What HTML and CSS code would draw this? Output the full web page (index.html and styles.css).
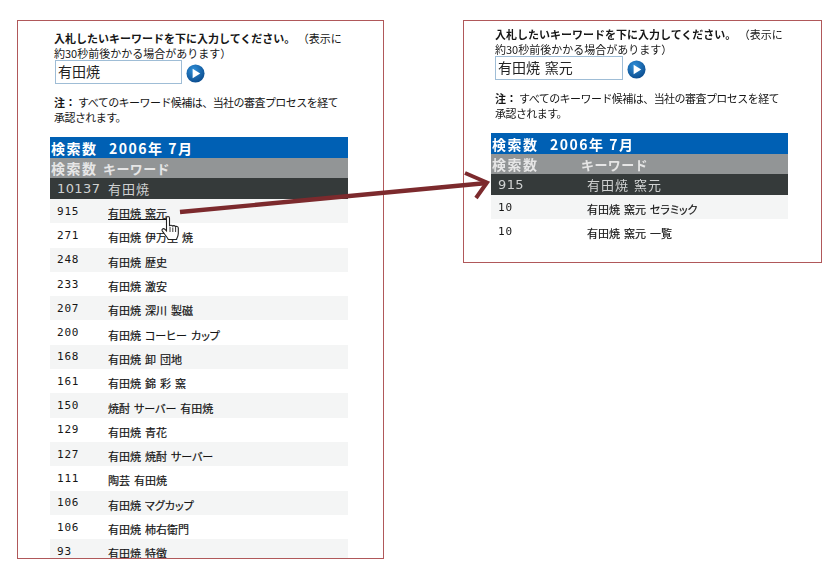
FILE: index.html
```html
<!DOCTYPE html>
<html lang="ja">
<head>
<meta charset="utf-8">
<title>キーワード候補</title>
<link rel="stylesheet" href="styles.css">
</head>
<body>
<main class="stage">
  <section class="panel panel-left">
    <div class="intro"><b>入札したいキーワードを下に入力してください。</b> （表示に<br>約30秒前後かかる場合があります）</div>
    <div class="search">
      <div class="field">有田焼</div>
      <svg class="go" viewBox="0 0 20 20" aria-hidden="true"><defs><radialGradient id="g1" cx="40%" cy="30%" r="75%"><stop offset="0" stop-color="#2f8fd8"/><stop offset="1" stop-color="#0a4a8c"/></radialGradient></defs><circle cx="10" cy="10" r="9.500" fill="url(#g1)"/><path d="M7 5l8 5-8 5z" fill="#fff"/></svg>
    </div>
    <p class="note"><b class="note-label">注：</b>すべてのキーワード候補は、当社の審査プロセスを経て<br>承認されます。</p>
    <div class="table table-left">
      <div class="row head-blue"><span class="c1">検索数</span><span>2006年 7月</span></div>
      <div class="row head-grey"><span class="c1">検索数</span><span>キーワード</span></div>
      <div class="row head-dark"><span class="c1 big-num">10137</span><span>有田焼</span></div>
      <div class="row odd"><span class="c1 num">915</span><a class="kw link">有田焼 窯元</a></div>
      <div class="row"><span class="c1 num">271</span><span class="kw">有田焼 伊万里 焼</span></div>
      <div class="row odd"><span class="c1 num">248</span><span class="kw">有田焼 歴史</span></div>
      <div class="row"><span class="c1 num">233</span><span class="kw">有田焼 激安</span></div>
      <div class="row odd"><span class="c1 num">207</span><span class="kw">有田焼 深川 製磁</span></div>
      <div class="row"><span class="c1 num">200</span><span class="kw">有田焼 コーヒー カップ</span></div>
      <div class="row odd"><span class="c1 num">168</span><span class="kw">有田焼 卸 団地</span></div>
      <div class="row"><span class="c1 num">161</span><span class="kw">有田焼 錦 彩 窯</span></div>
      <div class="row odd"><span class="c1 num">150</span><span class="kw">焼酎 サーバー 有田焼</span></div>
      <div class="row"><span class="c1 num">129</span><span class="kw">有田焼 青花</span></div>
      <div class="row odd"><span class="c1 num">127</span><span class="kw">有田焼 焼酎 サーバー</span></div>
      <div class="row"><span class="c1 num">111</span><span class="kw">陶芸 有田焼</span></div>
      <div class="row odd"><span class="c1 num">106</span><span class="kw">有田焼 マグカップ</span></div>
      <div class="row"><span class="c1 num">106</span><span class="kw">有田焼 柿右衛門</span></div>
      <div class="row odd"><span class="c1 num">93</span><span class="kw">有田焼 特徴</span></div>
    </div>
  </section>
  <section class="panel panel-right">
    <div class="intro"><b>入札したいキーワードを下に入力してください。</b> （表示に<br>約30秒前後かかる場合があります）</div>
    <div class="search">
      <div class="field">有田焼 窯元</div>
      <svg class="go" viewBox="0 0 20 20" aria-hidden="true"><circle cx="10" cy="10" r="9.500" fill="url(#g1)"/><path d="M7 5l8 5-8 5z" fill="#fff"/></svg>
    </div>
    <p class="note"><b class="note-label">注：</b>すべてのキーワード候補は、当社の審査プロセスを経て<br>承認されます。</p>
    <div class="table table-right">
      <div class="row head-blue"><span class="c1">検索数</span><span>2006年 7月</span></div>
      <div class="row head-grey"><span class="c1">検索数</span><span>キーワード</span></div>
      <div class="row head-dark"><span class="c1 big-num">915</span><span class="shift">有田焼 窯元</span></div>
      <div class="row odd"><span class="c1 num">10</span><span class="kw shift">有田焼 窯元 セラミック</span></div>
      <div class="row"><span class="c1 num">10</span><span class="kw shift">有田焼 窯元 一覧</span></div>
    </div>
  </section>
  <svg class="arrow" viewBox="0 0 840 576" aria-hidden="true">
    <path d="M180 212L487 183" stroke="#7c2a2d" stroke-width="4.300" fill="none"/>
    <path d="M465 173L487 182.500L476 198" stroke="#7c2a2d" stroke-width="4" fill="none"/>
  </svg>
  <svg class="hand" viewBox="0 0 20 28" aria-hidden="true">
    <path d="M5.500 3.200c0-2.200 3-2.200 3 0v8c.4-1.400 3-1.400 3 .3.400-1.300 2.800-1.200 3 .5.600-1 2.700-.8 2.800 1v5.500c0 2.500-1 4-2 6h-8c-1-2.500-4.500-6-6-8.500-1-1.800 1-3 2.500-1.800l1.700 1.700z" fill="#fff" stroke="#222" stroke-width="1.100"/>
    <path d="M9 12v5M11.800 12.500v4.500M14.600 13v4" stroke="#222" stroke-width=".9" fill="none"/>
  </svg>
</main>
</body>
</html>
```

FILE: styles.css
```css
html, body {
  margin: 0;
  padding: 0;
  background: #fff;
}
.stage {
  position: relative;
  width: 840px;
  height: 576px;
  overflow: hidden;
  display: flex;
  align-items: flex-start;
  padding: 20px 0 0 17px;
  box-sizing: border-box;
  gap: 79px;
  font-family: "Noto Sans CJK JP", "Liberation Sans", sans-serif;
  color: #161616;
  filter: blur(0.35px);
}
.panel {
  box-sizing: border-box;
  flex: none;
  border: 1px solid #b0585a;
  overflow: hidden;
  background: #fff;
}
.panel-left {
  width: 367px;
  height: 539px;
  padding: 10px 0 0 32px;
}
.panel-right {
  width: 359px;
  height: 243px;
  padding: 6px 0 0 27px;
}
.intro {
  margin-left: 4px;
  font-size: 11px;
  line-height: 15px;
  white-space: nowrap;
}
.search {
  display: flex;
  align-items: center;
  gap: 4px;
  margin: -2px 0 0 5px;
  height: 26px;
}
.panel-right .search { margin-left: 4px; }
.panel-right .field { width: 128px; }
.field {
  box-sizing: border-box;
  width: 127px;
  height: 24px;
  border: 1px solid #9fbdd6;
  padding-left: 2px;
  font-size: 14px;
  line-height: 20px;
  word-spacing: 1.500px;
  color: #222;
}
.go {
  width: 19px;
  height: 19px;
  margin-top: 3px;
}
.note {
  margin: 10px 0 0 4px;
  font-size: 11px;
  line-height: 15px;
  white-space: nowrap;
  letter-spacing: -.55px;
}
.note-label {
  display: inline-block;
  width: 24px;
  letter-spacing: 0;
}
.table {
  width: 298px;
  margin-top: 12px;
}
.table-right { width: 297px; }
.row {
  display: flex;
  align-items: center;
  height: 24.3px;
  font-size: 11px;
}
.odd { background: #f4f5f5; }
.c1 {
  flex: none;
  width: 58px;
  box-sizing: border-box;
  padding-left: 7px;
}
.head-blue {
  height: 21px;
  background: #0060b4;
  color: #fff;
  font-weight: 700;
  font-size: 14px;
  letter-spacing: 1.500px;
}
.head-grey {
  height: 20px;
  background: #929596;
  color: #e6e6e6;
  font-weight: 700;
  font-size: 13px;
  letter-spacing: .4px;
}
.head-dark {
  height: 21px;
  background: #353a3a;
  color: #d0d2d2;
  font-size: 13px;
  letter-spacing: 1px;
  word-spacing: 1px;
}
.head-blue .c1, .head-grey .c1 {
  padding-left: 1px;
  letter-spacing: 1.500px;
  font-size: 14px;
}
.head-blue .c1 { width: 59px; }
.table-left .head-grey .c1 { width: 53px; }
.big-num {
  font-family: "DejaVu Sans", sans-serif;
  font-weight: 400;
  font-size: 13px;
  letter-spacing: .4px;
}
.num {
  font-family: "DejaVu Sans Mono", "DejaVu Sans", monospace;
  font-size: 11px;
  letter-spacing: .8px;
}
.kw {
  padding-top: 4px;
  word-spacing: 1.500px;
  -webkit-text-stroke: .2px;
  font-feature-settings: "palt";
}
.link { text-decoration: underline; }
.table-right .c1 { width: 90px; }
.table-right .head-blue .c1 { width: 59px; }
.table-right .shift { margin-left: 6px; }
.arrow {
  position: absolute;
  left: 0;
  top: 0;
  width: 840px;
  height: 576px;
  pointer-events: none;
}
.hand {
  position: absolute;
  left: 161px;
  top: 215px;
  width: 20px;
  height: 28px;
}
```
